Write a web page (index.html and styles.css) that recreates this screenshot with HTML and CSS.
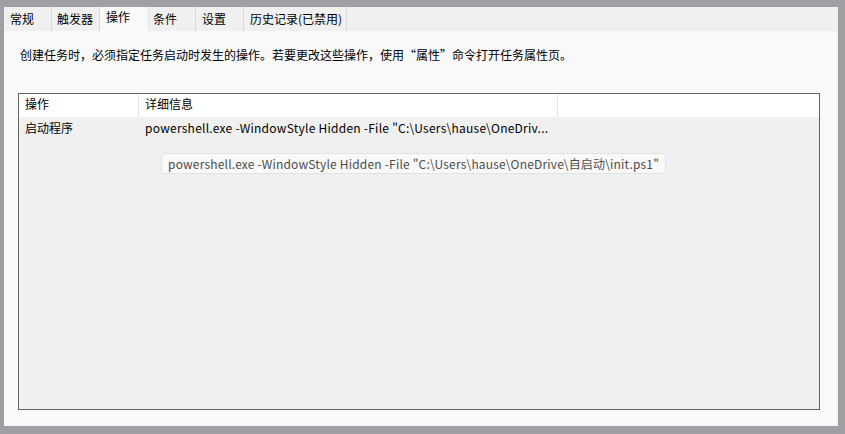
FILE: index.html
```html
<!DOCTYPE html>
<html lang="zh-CN">
<head>
<meta charset="utf-8">
<title>操作</title>
<link rel="stylesheet" href="styles.css">
</head>
<body>
<div class="window">
  <div class="tabs">
    <div class="tab t1">常规</div>
    <div class="tab t2">触发器</div>
    <div class="tab t3 active">操作</div>
    <div class="tab t4">条件</div>
    <div class="tab t5">设置</div>
    <div class="tab t6">历史记录(已禁用)</div>
  </div>
  <div class="panel">
    <p class="desc">创建任务时，必须指定任务启动时发生的操作。若要更改这些操作，使用“属性”命令打开任务属性页。</p>
    <div class="list">
      <div class="list-head">
        <div class="col c1">操作</div>
        <div class="col c2">详细信息</div>
        <div class="col c3"></div>
      </div>
      <div class="list-row">
        <div class="col c1">启动程序</div>
        <div class="col c2 latin">powershell.exe -WindowStyle Hidden -File "C:\Users\hause\OneDriv...</div>
      </div>
      <div class="tooltip">powershell.exe -WindowStyle Hidden -File "C:\Users\hause\OneDrive\自启动\init.ps1"</div>
    </div>
  </div>
</div>
</body>
</html>
```
FILE: styles.css
```css
html, body {
  margin: 0;
  padding: 0;
}
body {
  background: #a0a0a4;
  width: 845px;
  height: 434px;
  overflow: hidden;
  font-family: "Noto Sans CJK SC", "Noto Sans", sans-serif;
  font-size: 12px;
  color: #000;
}
.latin {
  letter-spacing: 0.25px;
}
.window {
  margin: 7px 7px 0 4px;
  height: 419px;
  background: #f0f0f0;
  display: flex;
  flex-direction: column;
}
.tabs {
  height: 24px;
  display: flex;
  background: #f0f0f0;
  flex: none;
}
.tab {
  box-sizing: border-box;
  height: 24px;
  padding: 4px 0 0 6px;
  line-height: 16px;
  border-right: 1px solid #d9d9d9;
  white-space: nowrap;
}
.t1 { width: 48px; }
.t2 { width: 48px; padding-left: 5px; }
.t3 { width: 49px; }
.t4 { width: 47px; padding-left: 4px; }
.t5 { width: 48px; }
.t6 { width: 103px; }
.tab.active {
  background: #f9f9f9;
  padding-top: 2px;
  border-right: 1px solid #e4e4e4;
}
.panel {
  flex: 1;
  margin-right: 2px;
  background: #f9f9f9;
  border-right: 1px solid #ffffff;
  padding: 16px 15px 16px 14px;
  display: flex;
  flex-direction: column;
}
.desc {
  margin: 0 0 0 2px;
  line-height: 16px;
  height: 16px;
  white-space: nowrap;
}
.list {
  margin-top: 30px;
  flex: 1;
  border: 1px solid #646464;
  background: #f0f0f0;
  position: relative;
}
.list-head {
  display: flex;
  height: 23px;
  background: #ffffff;
}
.list-head .col {
  border-right: 1px solid #e5e5e5;
  line-height: 20px;
}
.col {
  box-sizing: border-box;
  padding-left: 6px;
  white-space: nowrap;
}
.c1 { width: 120px; }
.c2 { width: 419px; }
.list-head .c3 { flex: 1; border-right: none; }
.list-row {
  display: flex;
  height: 22px;
  line-height: 22px;
}
.tooltip {
  position: absolute;
  left: 142px;
  top: 59px;
  box-sizing: border-box;
  height: 21px;
  padding: 0 6px;
  line-height: 19px;
  letter-spacing: 0.19px;
  background: #f9f9f9;
  border: 1px solid #e2e2e2;
  border-radius: 3px;
  color: #4d4d4d;
  white-space: nowrap;
}
```
